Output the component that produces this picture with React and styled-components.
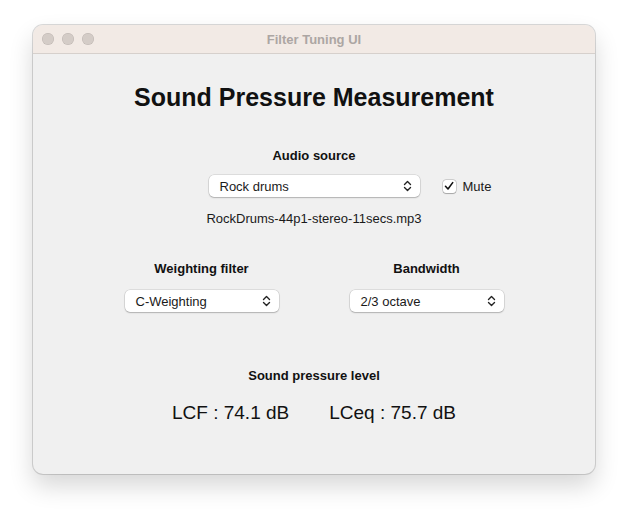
import React from 'react';
import styled, { createGlobalStyle } from 'styled-components';

const Global = createGlobalStyle`
  html, body {
    margin: 0;
    padding: 0;
    background: #ffffff;
    font-family: "Liberation Sans", Arial, sans-serif;
    color: #1a1a1a;
  }
`;

const Page = styled.div`
  width: 628px;
  height: 516px;
  padding: 25px 0 0 33px;
  box-sizing: border-box;
`;

const Window = styled.div`
  width: 562px;
  height: 449px;
  border-radius: 10px;
  background: #f0f0f0;
  overflow: hidden;
  box-shadow: 0 0 0 1px rgba(0, 0, 0, 0.14), 0 12px 24px rgba(0, 0, 0, 0.16);
  display: flex;
  flex-direction: column;
`;

const TitleBar = styled.div`
  height: 28px;
  background: #f2eae5;
  border-bottom: 1px solid #d6d0cc;
  display: grid;
  grid-template-columns: 80px 1fr 80px;
  align-items: center;
`;

const Lights = styled.div`
  display: flex;
  gap: 8px;
  padding-left: 9px;
`;

const Light = styled.span`
  width: 12px;
  height: 12px;
  border-radius: 50%;
  background: #d4ccc7;
  box-shadow: inset 0 0 0 0.5px rgba(0, 0, 0, 0.12);
`;

const WindowTitle = styled.div`
  text-align: center;
  font-size: 13px;
  font-weight: bold;
  color: #aca6a3;
`;

const Content = styled.div`
  flex: 1;
  display: flex;
  flex-direction: column;
  align-items: center;
  padding-top: 29px;
`;

const Heading = styled.h1`
  margin: 0;
  font-size: 25px;
  line-height: 28px;
  font-weight: bold;
  color: #111;
`;

const Label = styled.div`
  font-size: 13px;
  line-height: 16px;
  font-weight: bold;
  color: #111;
  margin-top: ${(p) => p.$top || 0}px;
  text-align: center;
`;

const SourceRow = styled.div`
  width: 100%;
  display: grid;
  grid-template-columns: 1fr auto 1fr;
  align-items: center;
  margin-top: 11px;
`;

const PopupBox = styled.div`
  width: ${(p) => p.$width}px;
  height: 22px;
  box-sizing: border-box;
  background: #ffffff;
  border-radius: 5px;
  box-shadow: 0 0 0 0.5px rgba(0, 0, 0, 0.16), 0 1px 1.5px rgba(0, 0, 0, 0.2);
  display: flex;
  align-items: center;
  justify-content: space-between;
  padding: 0 8px 0 11px;
  font-size: 13px;
  color: #1a1a1a;
`;

const Mute = styled.label`
  display: flex;
  align-items: center;
  gap: 7px;
  margin-left: 23px;
  font-size: 13px;
  color: #1a1a1a;
`;

const Check = styled.span`
  width: 13px;
  height: 13px;
  box-sizing: border-box;
  border-radius: 3px;
  background: #ffffff;
  box-shadow: 0 0 0 0.5px rgba(0, 0, 0, 0.25), 0 0.5px 1px rgba(0, 0, 0, 0.2);
  display: flex;
  align-items: center;
  justify-content: center;
`;

const FileName = styled.div`
  font-size: 13px;
  line-height: 16px;
  margin-top: 14px;
  color: #1a1a1a;
`;

const Columns = styled.div`
  display: flex;
  gap: 71px;
  margin-top: 34px;
`;

const Column = styled.div`
  display: flex;
  flex-direction: column;
  align-items: center;
  gap: 13px;
`;

const Readouts = styled.div`
  display: flex;
  gap: 40px;
  margin-top: 17px;
  font-size: 19px;
  line-height: 23px;
  color: #111;
`;

const Chevrons = () => (
  <svg width="9" height="12" viewBox="0 0 9 12" fill="none" stroke="#222" strokeWidth="1.4" strokeLinecap="round" strokeLinejoin="round">
    <path d="M1.5 4.5 L4.5 1.5 L7.5 4.5" />
    <path d="M1.5 7.5 L4.5 10.5 L7.5 7.5" />
  </svg>
);

const Popup = ({ width, children }) => (
  <PopupBox $width={width}>
    <span>{children}</span>
    <Chevrons />
  </PopupBox>
);

const App = () => {
  return (
    <>
      <Global />
      <Page>
        <Window>
          <TitleBar>
            <Lights>
              <Light />
              <Light />
              <Light />
            </Lights>
            <WindowTitle>Filter Tuning UI</WindowTitle>
            <div />
          </TitleBar>
          <Content>
            <Heading>Sound Pressure Measurement</Heading>
            <Label $top={37}>Audio source</Label>
            <SourceRow>
              <div />
              <Popup width={211}>Rock drums</Popup>
              <Mute>
                <Check>
                  <svg width="10" height="10" viewBox="0 0 10 10" fill="none" stroke="#111" strokeWidth="1.6" strokeLinecap="round" strokeLinejoin="round">
                    <path d="M1.5 5.3 L4 8 L8.7 1.6" />
                  </svg>
                </Check>
                Mute
              </Mute>
            </SourceRow>
            <FileName>RockDrums-44p1-stereo-11secs.mp3</FileName>
            <Columns>
              <Column>
                <Label>Weighting filter</Label>
                <Popup width={154}>C-Weighting</Popup>
              </Column>
              <Column>
                <Label>Bandwidth</Label>
                <Popup width={154}>2/3 octave</Popup>
              </Column>
            </Columns>
            <Label $top={56}>Sound pressure level</Label>
            <Readouts>
              <span>LCF : 74.1 dB</span>
              <span>LCeq : 75.7 dB</span>
            </Readouts>
          </Content>
        </Window>
      </Page>
    </>
  );
};

export default App;
